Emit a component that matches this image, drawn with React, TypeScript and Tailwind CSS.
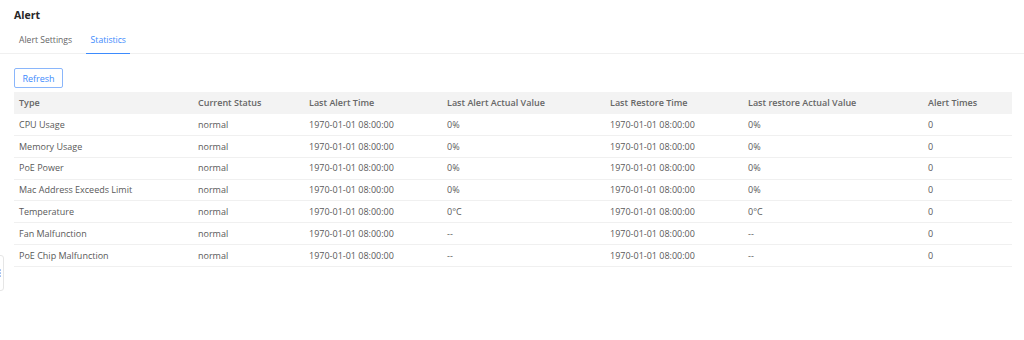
import React from 'react';

type Row = {
  type: string;
  status: string;
  alertTime: string;
  alertValue: string;
  restoreTime: string;
  restoreValue: string;
  times: string;
};

const rows: Row[] = [
  { type: 'CPU Usage', status: 'normal', alertTime: '1970-01-01 08:00:00', alertValue: '0%', restoreTime: '1970-01-01 08:00:00', restoreValue: '0%', times: '0' },
  { type: 'Memory Usage', status: 'normal', alertTime: '1970-01-01 08:00:00', alertValue: '0%', restoreTime: '1970-01-01 08:00:00', restoreValue: '0%', times: '0' },
  { type: 'PoE Power', status: 'normal', alertTime: '1970-01-01 08:00:00', alertValue: '0%', restoreTime: '1970-01-01 08:00:00', restoreValue: '0%', times: '0' },
  { type: 'Mac Address Exceeds Limit', status: 'normal', alertTime: '1970-01-01 08:00:00', alertValue: '0%', restoreTime: '1970-01-01 08:00:00', restoreValue: '0%', times: '0' },
  { type: 'Temperature', status: 'normal', alertTime: '1970-01-01 08:00:00', alertValue: '0°C', restoreTime: '1970-01-01 08:00:00', restoreValue: '0°C', times: '0' },
  { type: 'Fan Malfunction', status: 'normal', alertTime: '1970-01-01 08:00:00', alertValue: '--', restoreTime: '1970-01-01 08:00:00', restoreValue: '--', times: '0' },
  { type: 'PoE Chip Malfunction', status: 'normal', alertTime: '1970-01-01 08:00:00', alertValue: '--', restoreTime: '1970-01-01 08:00:00', restoreValue: '--', times: '0' },
];

const headers = [
  'Type',
  'Current Status',
  'Last Alert Time',
  'Last Alert Actual Value',
  'Last Restore Time',
  'Last restore Actual Value',
  'Alert Times',
];

const gridCols = 'grid grid-cols-[179px_111px_138px_163px_138px_180px_1fr]';

export default function App() {
  return (
    <div className="relative w-[1024px] h-[340px] bg-white text-[9px] text-[#595959] font-['Open_Sans',sans-serif] overflow-hidden">
      <div className="px-[14px] pt-[8px]">
        <h1 className="text-[10.5px] font-bold text-[#262626] leading-[14px]">Alert</h1>
      </div>

      {/* tabs */}
      <div className="mt-[12px] flex items-end border-b border-[#f0f0f0] pl-[19px] h-[20px]">
        <div className="pb-[6px] mr-[14px] text-[#666] text-[8.6px]">Alert Settings</div>
        <div className="relative px-[4.5px] pb-[6px] text-[#3d8bfd] text-[8.6px]">
          Statistics
          <div className="absolute left-0 right-0 bottom-[-1px] h-[1.5px] bg-[#3d8bfd]" />
        </div>
      </div>

      <div className="px-[14px] pt-[14px]">
        <button className="h-[20px] w-[49px] rounded-[2px] border border-[#8ab6fb] text-[#3d8bfd] bg-white leading-none">
          Refresh
        </button>

        <div className="mt-[4px] w-[998px]">
          <div className={`${gridCols} h-[22px] items-center bg-[#f3f3f3] font-semibold text-[#666]`}>
            {headers.map((h) => (
              <div key={h} className="px-[5px] whitespace-nowrap">{h}</div>
            ))}
          </div>
          {rows.map((r) => (
            <div key={r.type} className={`${gridCols} h-[21.85px] items-center border-b border-[#f0f0f0]`}>
              <div className="px-[5px] whitespace-nowrap">{r.type}</div>
              <div className="px-[5px]">{r.status}</div>
              <div className="px-[5px]">{r.alertTime}</div>
              <div className="px-[5px]">{r.alertValue}</div>
              <div className="px-[5px]">{r.restoreTime}</div>
              <div className="px-[5px]">{r.restoreValue}</div>
              <div className="px-[5px]">{r.times}</div>
            </div>
          ))}
        </div>
      </div>

      {/* side drawer handle */}
      <div className="absolute left-[-6px] top-[255px] w-[10px] h-[36px] rounded-[3px] border border-[#e6e6e6] bg-white flex flex-col items-end justify-center gap-[1.5px] pr-[2px]">
        <div className="w-[1.5px] h-[1.5px] rounded-full bg-[#9bbcf0]" />
        <div className="w-[1.5px] h-[1.5px] rounded-full bg-[#9bbcf0]" />
        <div className="w-[1.5px] h-[1.5px] rounded-full bg-[#9bbcf0]" />
      </div>
    </div>
  );
}
